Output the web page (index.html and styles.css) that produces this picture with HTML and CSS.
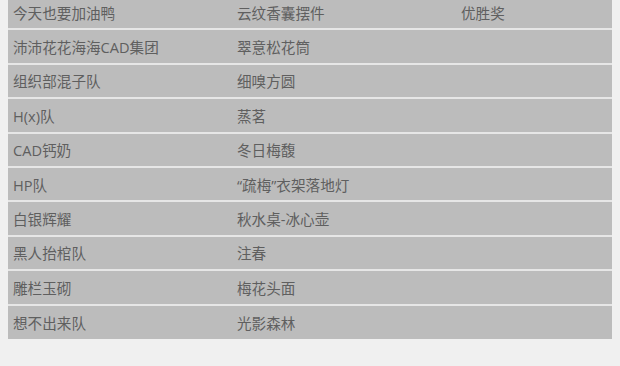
FILE: index.html
```html
<!DOCTYPE html>
<html lang="zh-CN">
<head>
<meta charset="utf-8">
<link rel="stylesheet" href="styles.css">
</head>
<body>
<table class="awards">
  <colgroup><col class="c1"><col class="c2"><col class="c3"></colgroup>
  <tbody>
    <tr><td>今天也要加油鸭</td><td>云纹香囊摆件</td><td>优胜奖</td></tr>
    <tr><td>沛沛花花海海CAD集团</td><td>翠意松花筒</td><td></td></tr>
    <tr><td>组织部混子队</td><td>细嗅方圆</td><td></td></tr>
    <tr><td>H(x)队</td><td>蒸茗</td><td></td></tr>
    <tr><td>CAD钙奶</td><td>冬日梅馥</td><td></td></tr>
    <tr><td>HP队</td><td>“疏梅”衣架落地灯</td><td></td></tr>
    <tr><td>白银辉耀</td><td>秋水桌-冰心壶</td><td></td></tr>
    <tr><td>黑人抬棺队</td><td>注春</td><td></td></tr>
    <tr><td>雕栏玉砌</td><td>梅花头面</td><td></td></tr>
    <tr><td>想不出来队</td><td>光影森林</td><td></td></tr>
  </tbody>
</table>
</body>
</html>
```

FILE: styles.css
```css
html, body {
  margin: 0;
  padding: 0;
  background: #f0f0f0;
}
body {
  padding: 0 8px;
  font-family: "Open Sans", "Noto Sans CJK SC", sans-serif;
}
.awards {
  width: 604px;
  margin-top: -3px;
  border-collapse: collapse;
  table-layout: fixed;
  background: #bcbcbc;
  color: #5f5f5f;
  font-size: 14.6px;
}
.c1, .c2 { width: 224px; }
.c3 { width: 156px; }
.awards tr {
  height: 34.4px;
  border-top: 2px solid #e6e6e6;
}
.awards tr:first-child { border-top: none; height: 32.4px; }
.awards td {
  padding: 0 5px;
  vertical-align: middle;
  white-space: nowrap;
}
```
